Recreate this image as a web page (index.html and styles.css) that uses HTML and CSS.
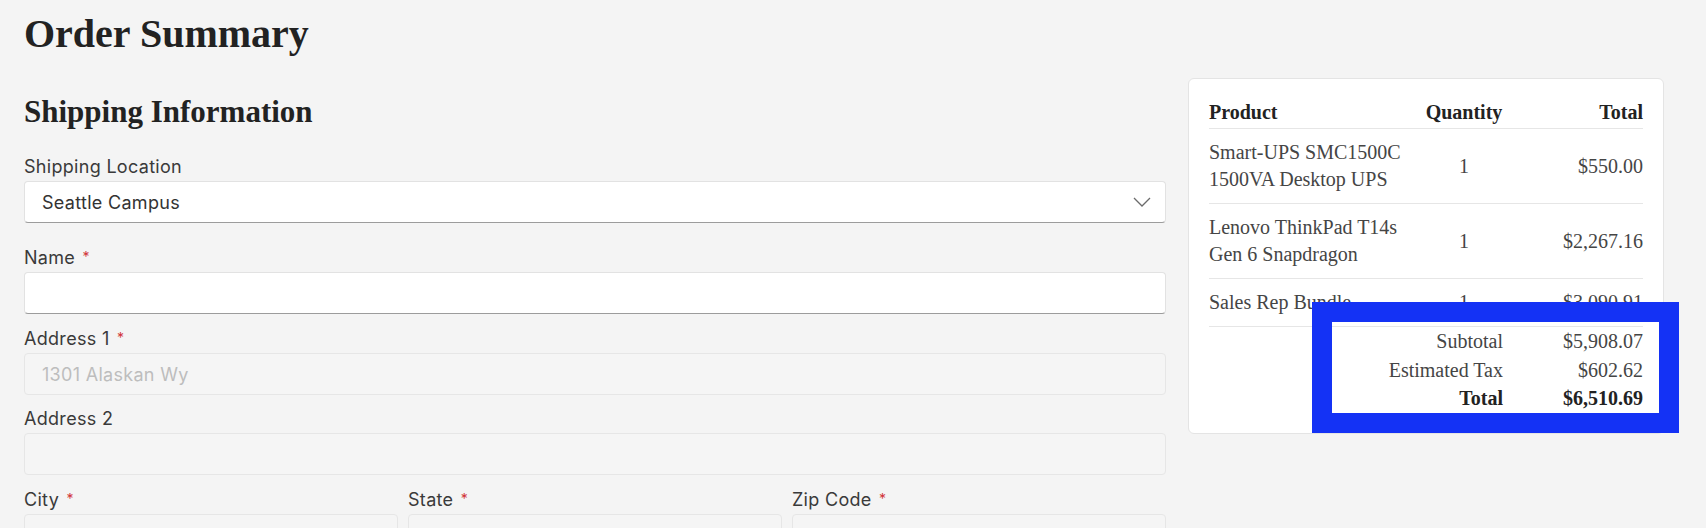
FILE: index.html
```html
<!DOCTYPE html>
<html lang="en">
<head>
    <meta charset="UTF-8">
    <meta name="viewport" content="width=device-width, initial-scale=1.0">
    <title>Order Summary</title>
    <link rel="stylesheet" href="styles.css">
</head>
<body>
    <h1 class="page-title">Order Summary</h1>
    <div class="layout">
        <section class="shipping">
            <h2 class="section-title">Shipping Information</h2>
            <div class="fields">
                <div class="field field-location">
                    <label for="location">Shipping Location</label>
                    <div class="select-wrap">
                        <select id="location" class="control">
                            <option>Seattle Campus</option>
                        </select>
                        <svg class="chevron" width="18" height="10" viewBox="0 0 18 10">
                            <path d="M1 1l8 8 8-8" fill="none" stroke="#6b6b6b" stroke-width="1.3"/>
                        </svg>
                    </div>
                </div>
                <div class="field">
                    <label for="name">Name <span class="req">*</span></label>
                    <input type="text" id="name" class="control">
                </div>
                <div class="field">
                    <label for="address1">Address 1 <span class="req">*</span></label>
                    <input type="text" id="address1" class="control" value="1301 Alaskan Wy" disabled>
                </div>
                <div class="field">
                    <label for="address2">Address 2</label>
                    <input type="text" id="address2" class="control" disabled>
                </div>
                <div class="field-row">
                    <div class="field">
                        <label for="city">City <span class="req">*</span></label>
                        <input type="text" id="city" class="control" value="Seattle" disabled>
                    </div>
                    <div class="field">
                        <label for="state">State <span class="req">*</span></label>
                        <input type="text" id="state" class="control" value="WA" disabled>
                    </div>
                    <div class="field">
                        <label for="zip">Zip Code <span class="req">*</span></label>
                        <input type="text" id="zip" class="control" value="98101" disabled>
                    </div>
                </div>
            </div>
        </section>

        <aside class="cart">
            <table class="cart-table">
                <thead>
                    <tr>
                        <th class="col-product">Product</th>
                        <th class="col-qty">Quantity</th>
                        <th class="col-total">Total</th>
                    </tr>
                </thead>
                <tbody>
                    <tr>
                        <td class="col-product">Smart-UPS SMC1500C 1500VA Desktop UPS</td>
                        <td class="col-qty">1</td>
                        <td class="col-total">$550.00</td>
                    </tr>
                    <tr>
                        <td class="col-product">Lenovo ThinkPad T14s Gen 6 Snapdragon</td>
                        <td class="col-qty">1</td>
                        <td class="col-total">$2,267.16</td>
                    </tr>
                    <tr>
                        <td class="col-product">Sales Rep Bundle</td>
                        <td class="col-qty">1</td>
                        <td class="col-total">$3,090.91</td>
                    </tr>
                </tbody>
            </table>
            <table class="totals">
                <tr>
                    <td>Subtotal</td>
                    <td class="amount">$5,908.07</td>
                </tr>
                <tr>
                    <td>Estimated Tax</td>
                    <td class="amount">$602.62</td>
                </tr>
                <tr class="grand">
                    <td>Total</td>
                    <td class="amount">$6,510.69</td>
                </tr>
            </table>
            <div class="highlight"></div>
        </aside>
    </div>
</body>
</html>
```

FILE: styles.css
```css
body {
    margin: 0;
    padding: 10px 0 0 24px;
    background-color: #f4f4f4;
    color: #333;
    font-family: Inter, "Open Sans", sans-serif;
}
.page-title {
    margin: 0 0 20px;
    font-family: "Liberation Serif", serif;
    font-size: 40px;
    line-height: 48px;
    font-weight: bold;
    color: #222;
}
.layout {
    display: grid;
    grid-template-columns: 1142px 476px;
    column-gap: 22px;
    align-items: start;
}
.section-title {
    margin: 16px 0 23px;
    font-family: "Liberation Serif", serif;
    font-size: 31px;
    line-height: 36px;
    font-weight: bold;
    color: #222;
}
.fields {
    display: flex;
    flex-direction: column;
    gap: 10px;
}
.field {
    display: flex;
    flex-direction: column;
}
.field-location {
    margin-bottom: 10px;
}
.field label {
    font-size: 18px;
    line-height: 27px;
    letter-spacing: 0.3px;
    margin-bottom: 1px;
    color: #3a3a3a;
}
.req {
    color: #d13438;
    font-size: 14px;
    vertical-align: 2px;
    margin-left: 2px;
}
.control {
    box-sizing: border-box;
    width: 100%;
    height: 42px;
    padding: 0 17px;
    font-family: Inter, "Open Sans", sans-serif;
    font-size: 18px;
    letter-spacing: 0.3px;
    color: #333;
    background-color: #fff;
    border: 1px solid #e2e2e2;
    border-bottom-color: #9c9c9c;
    border-radius: 4px;
    outline: none;
}
.control:disabled {
    background-color: #f5f5f5;
    color: #bdbdbd;
    -webkit-text-fill-color: #bdbdbd;
    border-color: #e6e6e6;
}
.select-wrap {
    position: relative;
}
.select-wrap select {
    appearance: none;
    -webkit-appearance: none;
}
.chevron {
    position: absolute;
    right: 15px;
    top: 16px;
}
.field-row {
    display: grid;
    grid-template-columns: repeat(3, 1fr);
    column-gap: 10px;
}

.cart {
    position: relative;
    background-color: #fff;
    border: 1px solid #e4e4e4;
    border-radius: 6px;
    padding: 20px;
    font-family: "Liberation Serif", serif;
    font-size: 20px;
    line-height: 27px;
    color: #454545;
}
.cart-table {
    width: 100%;
    border-collapse: collapse;
    table-layout: fixed;
}
.cart-table th {
    padding: 0 0 2px;
    font-weight: bold;
    color: #222;
    border-bottom: 1px solid #e6e6e6;
}
.cart-table td {
    padding: 10px 0;
    vertical-align: middle;
    border-bottom: 1px solid #e6e6e6;
}
.col-product {
    width: 197px;
    text-align: left;
}
.col-qty {
    width: 116px;
    text-align: center;
}
.col-total {
    text-align: right;
}
.totals {
    margin-left: auto;
    border-collapse: collapse;
    line-height: 28.5px;
}
.totals td {
    padding: 0;
    text-align: right;
}
.totals .amount {
    width: 140px;
}
.totals .grand td {
    font-weight: bold;
    color: #222;
}
.highlight {
    position: absolute;
    left: 123px;
    top: 223px;
    width: 367px;
    height: 131px;
    box-sizing: border-box;
    border: 20px solid #1432f5;
}
```
